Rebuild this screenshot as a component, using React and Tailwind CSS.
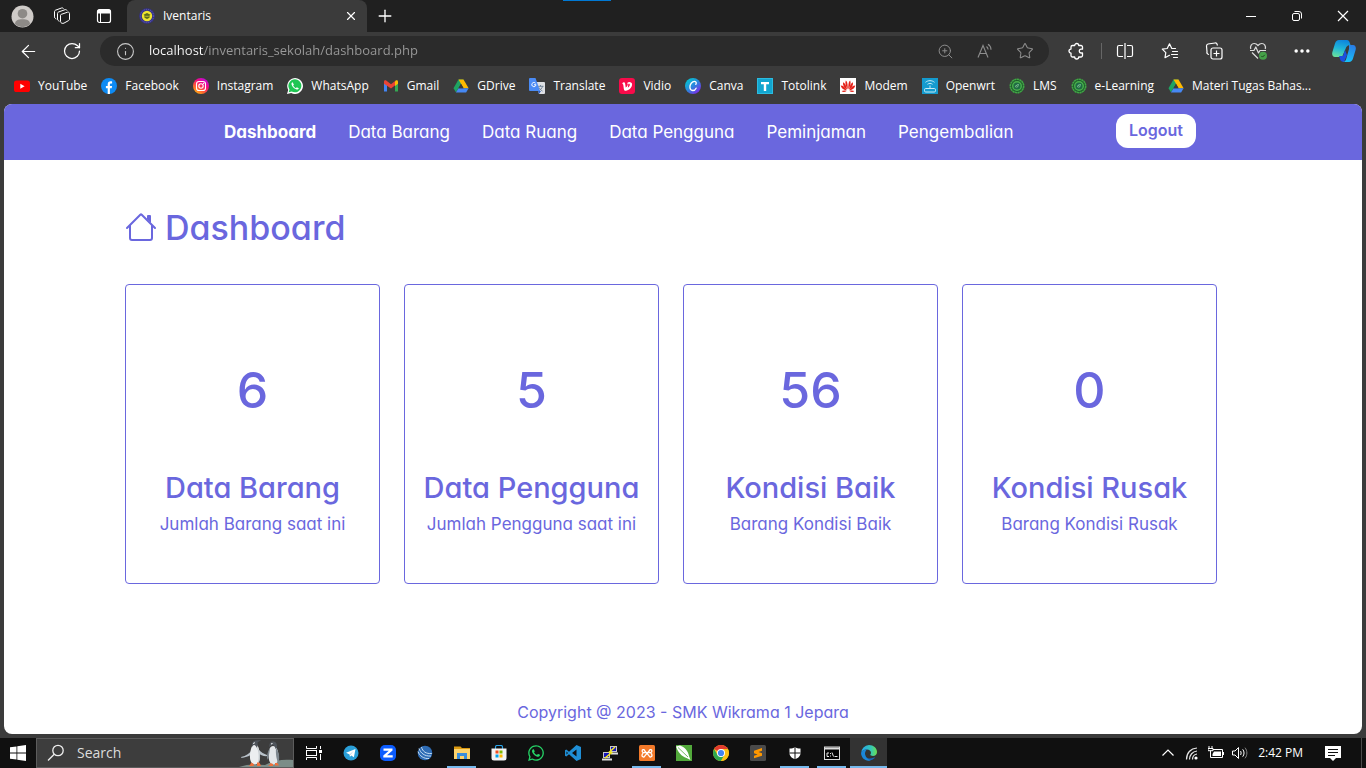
import React from "react";
import { ArrowLeft, RotateCw, Info, ZoomIn, Star, Ellipsis, X, Plus } from "lucide-react";
import { FaWhatsapp } from "react-icons/fa6";

function Svg({ size = 16, box = 16, className = "", children }) {
  return (
    <svg width={size} height={size} viewBox={`0 0 ${box} ${box}`} className={`shrink-0 ${className}`} fill="none" aria-hidden="true">
      {children}
    </svg>
  );
}

/* ---------- bookmark icons ---------- */
const YouTube = () => (
  <Svg>
    <rect x="0" y="2.5" width="16" height="11.5" rx="2.6" fill="#f00" />
    <path d="M6.3 5.8v4.9l4.3-2.45z" fill="#fff" />
  </Svg>
);
const Facebook = () => (
  <Svg>
    <circle cx="8" cy="8" r="8" fill="#0d8bf5" />
    <path d="M6.7 15.9V10.3H4.9V8h1.8V6.6c0-2.2 1.1-3.3 3-3.3.6 0 1.1.1 1.4.2v2h-1c-.9 0-1.2.4-1.2 1.2V8h2.2l-.4 2.3H8.9v5.6a8 8 0 0 1-2.2 0z" fill="#fff" />
  </Svg>
);
const Instagram = () => (
  <Svg>
    <defs>
      <linearGradient id="ig" x1="2" y1="16" x2="13" y2="0" gradientUnits="userSpaceOnUse">
        <stop stopColor="#ffc107" />
        <stop offset=".35" stopColor="#ff5a36" />
        <stop offset=".65" stopColor="#f5087e" />
        <stop offset="1" stopColor="#b40bf0" />
      </linearGradient>
    </defs>
    <circle cx="8" cy="8" r="8" fill="url(#ig)" />
    <rect x="3.5" y="3.5" width="9" height="9" rx="2.6" stroke="#fff" strokeWidth="1.1" />
    <circle cx="8" cy="8" r="2.2" stroke="#fff" strokeWidth="1.1" />
    <circle cx="10.6" cy="5.4" r=".6" fill="#fff" />
  </Svg>
);
const WhatsApp = () => (
  <Svg>
    <path d="M0 16l1.2-4.1A7.9 7.9 0 1 1 4.2 14.9z" fill="#fff" />
    <path d="M1.7 14.3l.8-2.8a6.5 6.5 0 1 1 2.2 2z" fill="#1fc653" />
    <path d="M5.600 4.200c-.8.3-1.300 1.100-1.100 2.100.5 2.500 2.700 4.700 5.200 5.200 1 .2 1.900-.4 2.100-1.300l-2-1-.9 1c-1.200-.5-2.200-1.400-2.800-2.600l.8-.9z" fill="#fff" />
  </Svg>
);
const Gmail = () => (
  <Svg>
    <path d="M1 13.500V4l3 2.300v7.200z" fill="#4285f4" />
    <path d="M15 13.500V4l-3 2.300v7.200z" fill="#34a853" />
    <path d="M1 5.800V3.800C1 2.400 2.500 2 3.500 2.700L8 6.200l4.500-3.500L12.500 7 8 10.500z" fill="#ea4335" />
    <path d="M15 5.800V3.800c0-1.400-1.500-1.800-2.500-1.100L12 3.200v4.700z" fill="#fbbc04" />
  </Svg>
);
const Drive = () => (
  <Svg>
    <path d="M5.500 1.500h5L6 9.300 2.900 14.300.5 10.200z" fill="#1ea362" />
    <path d="M5.500 1.500h5l5.100 8.700h-5z" fill="#ffba00" />
    <path d="M5.500 10.200h10.100l-2.500 4.300H2.900z" fill="#4688f4" />
    <path d="M8 5.800l2.500 4.400h-5z" fill="#3b3b3b" />
  </Svg>
);
const Translate = () => (
  <Svg>
    <path d="M6 4h9a1 1 0 0 1 1 1v10a1 1 0 0 1-1 1h-5z" fill="#dfe1e5" />
    <path d="M8.500 8.300h6M11.500 7v1.300M13.500 8.300c-.5 2-2 3.600-3.700 4.500M10 9.500c.7 1.500 2 2.800 3.500 3.600" stroke="#6b7f93" strokeWidth=".9" />
    <path d="M1 0h5.500L11 13H1a1 1 0 0 1-1-1V1a1 1 0 0 1 1-1z" fill="#4a8bf5" />
    <path d="M9 13h3l-2 3z" fill="#2a5bc0" />
    <path d="M6.500 5.200a2.100 2.100 0 1 0 .5 1.600H5" stroke="#fff" strokeWidth="1" />
  </Svg>
);
const Vidio = () => (
  <Svg>
    <rect width="16" height="16" rx="3" fill="#f80b4a" />
    <path d="M3.200 5.200c1.500-1.400 2.700-1 3 .8l.5 3.600c2-1.400 2.700-3 1.500-4.600 1.800-1.800 4.900-.9 4.900 1.400 0 3-3.400 6-6.200 6.300-1.400.1-1.900-.6-2.100-2l-.5-4z" fill="#fff" />
    <path d="M9.300 5.900c1-.5 1.800.3 1.500 1.300-.3 1-1.200 2-2 2.600z" fill="#f80b4a" />
  </Svg>
);
const Canva = () => (
  <Svg>
    <defs>
      <linearGradient id="cv" x1="2" y1="2" x2="13" y2="15" gradientUnits="userSpaceOnUse">
        <stop stopColor="#05c3d2" />
        <stop offset=".5" stopColor="#2b86dd" />
        <stop offset="1" stopColor="#7d2ae8" />
      </linearGradient>
    </defs>
    <circle cx="8" cy="8" r="8" fill="url(#cv)" />
    <path d="M10.800 6.400c.8-1.200.5-3-1.200-3-2.700 0-4.800 3-4.700 5.900.1 2 1.200 3.200 2.800 3.200 1.500 0 2.800-.9 3.400-2.300" stroke="#fff" strokeWidth="1.300" strokeLinecap="round" />
  </Svg>
);
const Totolink = () => (
  <Svg>
    <rect width="16" height="16" fill="#12a5cf" />
    <rect x=".5" y=".5" width="15" height="15" stroke="#2bbce0" />
    <path d="M4 4h8v2.200H9.200V13H6.800V6.200H4z" fill="#fff" />
  </Svg>
);
const Modem = () => (
  <Svg>
    <rect width="16" height="16" fill="#fff" />
    <g fill="#e5231b">
      <path d="M7.700 11.500C5.500 8 4.900 5 5.800 2.600c1.500.7 2 4 1.900 8.900z" />
      <path d="M8.300 11.500C10.500 8 11.100 5 10.200 2.600c-1.500.7-2 4-1.900 8.900z" />
      <path d="M7 11.800C4.200 10 2.600 7.200 3 4.300 5 5 6.600 8.200 7 11.800z" />
      <path d="M9 11.800c2.800-1.800 4.400-4.600 4-7.500-2 .7-3.600 3.900-4 7.500z" />
      <path d="M6.600 12.400C3.400 12 1.200 10.300.7 7.600c2.300 0 4.700 1.900 5.900 4.800zM9.400 12.400c3.200-.4 5.400-2.100 5.900-4.800-2.300 0-4.700 1.900-5.900 4.800z" />
      <path d="M6.500 12.900c-1.500 1.500-3.700 1.500-4.900.2 1.500-.7 3.300-.7 4.900-.2zM9.500 12.900c1.500 1.500 3.700 1.500 4.900.2-1.500-.7-3.300-.7-4.900-.2z" />
    </g>
  </Svg>
);
const Openwrt = () => (
  <Svg>
    <rect width="16" height="16" fill="#149bcf" />
    <path d="M3.500 4.300c2.500-2.200 6.500-2.200 9 0M5.500 6.300c1.400-1.200 3.600-1.200 5 0M8 7.500v3.500" stroke="#c5ebf7" strokeWidth="1" />
    <rect x="2.500" y="10.500" width="11" height="3.500" rx="1.200" stroke="#c5ebf7" />
  </Svg>
);
const Lms = () => (
  <Svg>
    <circle cx="8" cy="8" r="6.700" fill="#1d5a2c" stroke="#3fa544" strokeWidth="1.600" strokeDasharray="2.200 .4" />
    <circle cx="8" cy="8" r="4.300" fill="#1f6b43" stroke="#49b04b" strokeWidth="1.400" />
    <path d="M6 9.800c-.3-2.200 1.300-3.600 3.900-3.700.2 2.300-1.100 4-3.400 3.700z" fill="#6fb98a" />
    <path d="M6.200 10L9 7.200" stroke="#1b4a2f" strokeWidth=".7" />
  </Svg>
);

const bookmarks = [
  ["YouTube", YouTube], ["Facebook", Facebook], ["Instagram", Instagram], ["WhatsApp", WhatsApp],
  ["Gmail", Gmail], ["GDrive", Drive], ["Translate", Translate], ["Vidio", Vidio], ["Canva", Canva],
  ["Totolink", Totolink], ["Modem", Modem], ["Openwrt", Openwrt], ["LMS", Lms], ["e-Learning", Lms],
  ["Materi Tugas Bahas...", Drive],
];

/* ---------- browser chrome ---------- */
function IconButton({ label, className = "w-11", children }) {
  return (
    <button type="button" aria-label={label} className={`flex h-8 shrink-0 items-center justify-center ${className}`}>
      {children}
    </button>
  );
}

function TitleBar() {
  return (
    <div className="relative flex h-8 items-stretch bg-[#202020] text-white">
      <div className="absolute top-0 left-[563px] h-px w-12 bg-[#0078d4]" />
      <IconButton label="Profile">
        <Svg size={23} box={23}>
          <circle cx="11.500" cy="11.500" r="11" fill="#cfcbc8" />
          <circle cx="11.500" cy="8.700" r="4.800" fill="#8d8a87" />
          <path d="M4 19.300c0-4 3-5 7.500-5s7.500 1 7.500 5a11 11 0 0 1-15 0z" fill="#8d8a87" />
        </Svg>
      </IconButton>
      <IconButton label="Workspaces" className="w-9">
        <Svg size={18} box={18} className="stroke-white">
          <path d="M8.200 7.400l6.300-2.200c1-.3 2 .2 2 1.200v5.800c0 .7-.4 1.200-1 1.400l-4.500 2.500c-1.500.8-3.500 0-3.500-1.700V8.300c0-.4.3-.8.7-.9z" />
          <path d="M6.500 14.300l-.8-.4c-.8-.4-1.200-1-1.200-1.900V6.500c0-.7.4-1.300 1-1.500L12 2.700c.9-.3 1.700 0 2 .8" />
          <path d="M3.300 12l-.8-.4c-.7-.4-1-1-1-1.700V4.700c0-.7.4-1.300 1-1.500L8.500 1c.9-.3 1.700 0 2 .8" />
        </Svg>
      </IconButton>
      <IconButton label="Tab actions" className="w-[47px]">
        <Svg>
          <rect x="1.500" y="1.500" width="13" height="13" rx="2" stroke="#fff" strokeWidth="1.200" />
          <path d="M1.500 3a1.500 1.500 0 0 1 1.500-1.500h10A1.500 1.500 0 0 1 14.500 3v2.500h-13z" fill="#fff" />
          <path d="M4.500 5v9.500" stroke="#fff" />
        </Svg>
      </IconButton>
      <div className="flex w-60 items-center rounded-t-lg bg-[#3b3b3b] pr-2 pl-3">
        <Svg>
          <circle cx="8" cy="8" r="7.800" fill="#34318a" />
          <circle cx="8" cy="8" r="6.600" stroke="#7d78b8" strokeWidth=".7" strokeDasharray="1 1" />
          <circle cx="8" cy="8" r="5.200" fill="#efe52e" />
          <path d="M4.500 6.800L8 5l3.500 1.800-1 .7v2.300L8 11l-2.500-1.200V7.500z" fill="#5a6b1e" />
          <path d="M6.300 8.300h3.400" stroke="#efe52e" strokeWidth=".7" />
        </Svg>
        <span className="grow pl-2 text-xs">Iventaris</span>
        <button type="button" aria-label="Close tab" className="flex size-4 items-center justify-center">
          <X size={14} strokeWidth={2} />
        </button>
      </div>
      <IconButton label="New tab" className="w-9">
        <Plus size={20} strokeWidth={1.600} />
      </IconButton>
      <div className="grow" />
      <IconButton label="Minimize" className="w-[46px]">
        <Svg><path d="M3 8.500h10" stroke="#fff" /></Svg>
      </IconButton>
      <IconButton label="Restore" className="w-[46px]">
        <Svg className="stroke-white">
          <rect x="3.500" y="5.500" width="7" height="7" rx="1.500" />
          <path d="M5.500 3.500h4.500a2.500 2.500 0 0 1 2.500 2.500v4.500" />
        </Svg>
      </IconButton>
      <IconButton label="Close window" className="w-[46px]">
        <Svg><path d="M3 3l10 10M13 3L3 13" stroke="#fff" strokeWidth="1.200" /></Svg>
      </IconButton>
    </div>
  );
}

function AddressRow() {
  return (
    <div className="flex h-[38px] items-center pr-0.5 text-white">
      <IconButton label="Back" className="ml-1 w-12"><ArrowLeft size={21} strokeWidth={1.400} /></IconButton>
      <IconButton label="Refresh" className="mr-2 w-10"><RotateCw size={20} strokeWidth={1.500} /></IconButton>
      <div className="flex h-[30px] grow items-center rounded-full bg-[#2b2b2b] pr-1 text-[#8d8d8d]">
        <button type="button" aria-label="Site information" className="ml-4 text-[#c8c8c8]">
          <Info size={19} strokeWidth={1.400} />
        </button>
        <input
          type="text"
          aria-label="Address"
          defaultValue="localhost/inventaris_sekolah/dashboard.php"
          className="ml-3.5 min-w-0 grow bg-[linear-gradient(90deg,#fff_55px,#9a9a9a_55px)] bg-clip-text text-[13px] text-transparent outline-none"
        />
        <IconButton label="Zoom" className="w-10"><ZoomIn size={17} strokeWidth={1.400} /></IconButton>
        <IconButton label="Read aloud" className="w-10">
          <Svg>
            <path d="M1 14.500L6 2.500l5 12M2.800 10.500h6.400M9.500 3.500c1 .8 1.500 1.700 1.600 3M11 1.200c2 1.200 3 3 3 5.500" stroke="currentColor" strokeWidth="1.100" />
          </Svg>
        </IconButton>
        <IconButton label="Add to favorites" className="w-10"><Star size={18} strokeWidth={1.400} /></IconButton>
      </div>
      <IconButton label="Extensions" className="ml-0.5 w-[50px]">
        <Svg size={18} box={18}>
          <path d="M5.500 3.500h2.200a2 2 0 0 1 4 0H14a1.500 1.500 0 0 1 1.500 1.500v2.200h-1.300a1.900 1.900 0 0 0 0 3.800h1.300v2.500a1.500 1.500 0 0 1-1.500 1.500h-2.300a2 2 0 0 1-4 0H5.500A1.500 1.500 0 0 1 4 13.500v-2.400a2 2 0 0 1 0-4V5a1.500 1.500 0 0 1 1.500-1.500z" stroke="#fff" strokeWidth="1.300" strokeLinejoin="round" />
        </Svg>
      </IconButton>
      <span className="h-4 w-px bg-[#666]" />
      <IconButton label="Split screen" className="w-[46px]">
        <Svg size={18} box={18} className="stroke-white">
          <path d="M9 1v16M7 3.500H3A1.500 1.500 0 0 0 1.500 5v8A1.500 1.500 0 0 0 3 14.500h4M11 3.500h4A1.500 1.500 0 0 1 16.500 5v8a1.500 1.500 0 0 1-1.500 1.500h-4" strokeWidth="1.200" />
        </Svg>
      </IconButton>
      <IconButton label="Favorites">
        <Svg size={18} box={18} className="stroke-white">
          <path d="M14.500 6.500h-3.700L8.500 1.800 6.200 6.500 1.300 7.200l3.500 3.500-.8 5 4.500-2.400M11.500 9.500h5M10.500 12.500h6M12.500 15.500h4" strokeWidth="1.200" strokeLinejoin="round" strokeLinecap="round" />
        </Svg>
      </IconButton>
      <IconButton label="Collections">
        <Svg size={18} box={18} className="stroke-white">
          <rect x="6" y="6" width="11" height="11" rx="2" strokeWidth="1.200" />
          <path d="M11.500 8.500v6M8.500 11.500h6M4 12.500l-.7-.2a2 2 0 0 1-1.300-2.500L1.500 4a2 2 0 0 1 1.500-2L10 1a2 2 0 0 1 2.200 1.500l.3 1" strokeWidth="1.200" />
        </Svg>
      </IconButton>
      <IconButton label="Browser essentials">
        <Svg size={18} box={18}>
          <path d="M1.800 7C.8 4 2.700 1.500 5.200 1.500c1.700 0 2.800.8 3.800 2 1-1.200 2.100-2 3.800-2 2.500 0 4.400 2.500 3.400 5.500M3 10.500l6 6M1 8.500h4l1.800-3.500 2.700 6 1.500-2.500h6" stroke="#ddd" strokeWidth="1.200" strokeLinejoin="round" />
          <circle cx="14" cy="13.800" r="4" fill="#46a049" />
          <path d="M12.300 13.900l1.200 1.200 2.300-2.300" stroke="#173d1a" strokeWidth=".9" />
        </Svg>
      </IconButton>
      <IconButton label="Settings and more"><Ellipsis size={20} strokeWidth={2.200} /></IconButton>
      <IconButton label="Copilot" className="w-10">
        <Svg size={24} box={24}>
          <defs>
            <linearGradient id="cpa" x1="8" y1="0" x2="4" y2="18" gradientUnits="userSpaceOnUse">
              <stop stopColor="#0d83dd" /><stop offset=".5" stopColor="#1fb5d9" /><stop offset="1" stopColor="#6be29a" />
            </linearGradient>
            <linearGradient id="cpb" x1="20" y1="5" x2="14" y2="23" gradientUnits="userSpaceOnUse">
              <stop stopColor="#2a78e4" /><stop offset="1" stopColor="#17c5fa" />
            </linearGradient>
          </defs>
          <path d="M7 1h8c1.500 0 2.200 1 2.700 2.500L18.500 6c-3 0-4 1.200-4.800 3.500L10 18H3C.5 18-.3 15.500.4 13L3 4.500C3.700 2.200 5 1 7 1z" fill="url(#cpa)" />
          <path d="M7 17h4l2-6 2 5-3 7c-2 0-3.300-.8-4-3z" fill="#1b4fe0" />
          <path d="M17 6h4c2.500 0 3.300 2.500 2.600 5L21 19.500c-.7 2.200-2 3.500-4 3.500h-6c2 0 2.700-1.500 3.200-3L17 10z" fill="url(#cpb)" />
        </Svg>
      </IconButton>
    </div>
  );
}

function Bookmarks() {
  return (
    <nav aria-label="Bookmarks" className="flex h-[34px] items-center gap-3.5 overflow-hidden pb-0.5 pl-3.5 text-xs text-white">
      {bookmarks.map(([name, Icon]) => (
        <a key={name} href="#" className="flex shrink-0 items-center gap-2 whitespace-nowrap">
          <Icon />
          {name}
        </a>
      ))}
    </nav>
  );
}

/* ---------- web page ---------- */
const links = ["Dashboard", "Data Barang", "Data Ruang", "Data Pengguna", "Peminjaman", "Pengembalian"];
const cards = [
  ["6", "Data Barang", "Jumlah Barang saat ini"],
  ["5", "Data Pengguna", "Jumlah Pengguna saat ini"],
  ["56", "Kondisi Baik", "Barang Kondisi Baik"],
  ["0", "Kondisi Rusak", "Barang Kondisi Rusak"],
];

function Page() {
  return (
    <div className="mx-1 mb-1 flex grow flex-col overflow-hidden rounded-lg bg-white font-[Inter,sans-serif] text-[17px] text-[#6a67de] [font-feature-settings:'cv11']">
      <header className="flex h-14 items-center justify-between bg-[#6a67de] pr-[166px] pb-0.5 pl-[220px]">
        <nav aria-label="Main" className="flex gap-8 pt-1 text-white">
          {links.map((name, i) => (
            <a key={name} href="#" className={i === 0 ? "font-bold" : ""}>{name}</a>
          ))}
        </nav>
        <button type="button" className="h-[34px] w-20 rounded-xl bg-white pb-0.5 text-base font-semibold">Logout</button>
      </header>
      <main className="mx-auto w-full max-w-[1140px] grow px-3">
        <h1 className="mt-12 flex items-center gap-2 text-[34px] leading-9 font-medium">
          <svg width="32" height="32" viewBox="0 0 16 16" fill="currentColor" aria-hidden="true">
            <path fillRule="evenodd" d="M2 13.500V7h1v6.500a.5.5 0 0 0 .5.5h9a.5.5 0 0 0 .5-.5V7h1v6.500a1.500 1.500 0 0 1-1.500 1.500h-9A1.500 1.500 0 0 1 2 13.500zm11-11V6l-2-2V2.500a.5.5 0 0 1 .5-.5h1a.5.5 0 0 1 .5.5z" />
            <path fillRule="evenodd" d="M7.293 1.500a1 1 0 0 1 1.414 0l6.647 6.646a.5.5 0 0 1-.708.708L8 2.207 1.354 8.854a.5.5 0 1 1-.708-.708L7.293 1.500z" />
          </svg>
          <span className="pt-0.5">Dashboard</span>
        </h1>
        <div className="mt-[38px] grid grid-cols-4 gap-6 pr-6">
          {cards.map(([count, title, text]) => (
            <section key={title} className="flex h-[300px] flex-col items-center rounded border border-[#6a67de] text-center whitespace-nowrap">
              <p className="mt-[75px] text-[50px] leading-[60px] font-medium">{count}</p>
              <h2 className="mt-[50px] text-[29px] leading-9 font-medium">{title}</h2>
              <p className="mt-1.5 leading-6">{text}</p>
            </section>
          ))}
        </div>
      </main>
      <footer className="pb-2.5 text-center text-base leading-6">Copyright @ 2023 - SMK Wikrama 1 Jepara</footer>
    </div>
  );
}

/* ---------- taskbar ---------- */
const TaskView = () => (
  <Svg className="stroke-white">
    <path d="M.5 1v2.500h10V1M.5 15v-2.500h10V15" />
    <rect x=".5" y="5.500" width="10" height="5" />
    <path d="M14.500 1v3M14.500 9v6" />
    <path d="M13 6.500h3" strokeWidth="3" />
  </Svg>
);
const Telegram = () => (
  <Svg>
    <circle cx="8" cy="8" r="7.500" fill="#2a9fd8" />
    <path d="M3 7.800L12.500 4l-1.600 8.300-2.600-1.900-1.400 1.300-.3-2.300z" fill="#fff" />
    <path d="M6.600 9.400L11 5.600 7.300 10z" fill="#a9cfe3" />
  </Svg>
);
const Zalo = () => (
  <Svg>
    <rect width="16" height="16" rx="5" fill="#0b5cff" />
    <path d="M3.500 3.500h9v2L7 10.300h5.700v2.200H3.300v-2L8.800 5.700H3.500z" fill="#fff" />
  </Svg>
);
const Swirl = () => (
  <Svg>
    <circle cx="8" cy="8" r="7.300" fill="#2e6cb5" />
    <path d="M2 3.500C3.500 8 7.500 11.500 14 11M4.500 2C5.500 6.500 9 9 14.800 8.500M1 6.500c1.500 4.500 6 7.500 11 7" stroke="#c5ddf3" strokeWidth="1" />
  </Svg>
);
const Explorer = () => (
  <Svg>
    <path d="M0 1.500h6.500L8 3h8v5H0z" fill="#dc9a10" />
    <path d="M0 4h16v10H0z" fill="#fdd36c" />
    <path d="M3 14V8h10v6h-3v-3H6v3z" fill="#3a8ddb" />
  </Svg>
);
const Store = () => (
  <Svg>
    <path d="M4.500 4V2A1.500 1.500 0 0 1 6 .5h4A1.500 1.500 0 0 1 11.500 2v2" stroke="#2aa4e8" strokeWidth="1.200" />
    <path d="M.5 3.500h15V13a2.500 2.500 0 0 1-2.500 2.500H3A2.500 2.500 0 0 1 .5 13z" fill="#f4f4f4" />
    <path d="M4.500 5.500h3v3h-3z" fill="#f25022" /><path d="M8.500 5.500h3v3h-3z" fill="#7fba00" />
    <path d="M4.500 9.500h3v3h-3z" fill="#00a4ef" /><path d="M8.500 9.500h3v3h-3z" fill="#ffb900" />
  </Svg>
);
const WhatsAppLine = () => <FaWhatsapp size={18} className="text-[#25d366]" />;
const Code = () => (
  <Svg>
    <path d="M11.500 0L16 2v12l-4.500 2L4 9.300 1.300 11.500 0 10.800V5.200l1.300-.7L4 6.700z" fill="#1f8fd6" />
    <path d="M11.500 4.500v7L7 8zM1.500 6.500v3L3 8z" fill="#101010" />
  </Svg>
);
const Putty = () => (
  <Svg>
    <path d="M8 1h7v6H8z" fill="#c9c9c9" /><path d="M9 2h5v4H9z" fill="#1616b8" />
    <path d="M1 7h7v6H1z" fill="#c9c9c9" /><path d="M2 8h5v4H2z" fill="#1616b8" />
    <path d="M0 14.500h10M9 8.500h7" stroke="#ddd" strokeWidth="2" />
    <path d="M13 2L7.500 7l2 .8L3 13" stroke="#f5e81c" strokeWidth="1.500" />
  </Svg>
);
const Xampp = () => (
  <Svg>
    <rect width="16" height="16" rx="1.500" fill="#f37a2a" />
    <path d="M6 6.300C5.600 4.900 4.900 4.400 4 4.700c-1.300.5-1 2.600.3 2.900h7.400c1.300-.3 1.600-2.400.3-2.900-.9-.3-1.600.2-2 1.600L6 10.600c-.4 1.300-1.300 1.700-2.200 1.200-1.300-.7-.9-3 .5-3.400M10 10.600c.4 1.300 1.300 1.700 2.200 1.200 1.300-.7.9-3-.5-3.400M6 6.300l4 4.300" stroke="#fff" strokeWidth="1.300" strokeLinejoin="round" />
  </Svg>
);
const Corel = () => (
  <Svg>
    <rect width="16" height="16" fill="#52a93b" />
    <path d="M0 1.500L4 .5c4.500 1.500 8 5 9 10.500l1.500 4-4-2C5.500 11.500 2 7 0 1.500z" fill="#fff" />
    <path d="M2 2.500l10 9.500" stroke="#52a93b" strokeWidth=".8" />
  </Svg>
);
const Chrome = () => (
  <Svg>
    <circle cx="8" cy="8" r="8" fill="#fbc116" />
    <path d="M8 8L1.100 4A8 8 0 0 1 14.900 4z" fill="#e33b2e" />
    <path d="M1.100 4A8 8 0 0 0 8 16l3.500-6L8 8 4.500 10z" fill="#2da94f" />
    <path d="M8 4h6.900A8 8 0 0 1 8 16l3.500-6z" fill="#fbc116" />
    <circle cx="8" cy="8" r="4" fill="#fff" /><circle cx="8" cy="8" r="3.100" fill="#4285f4" />
  </Svg>
);
const Sublime = () => (
  <Svg>
    <rect width="16" height="16" rx="1.500" fill="#4a4a4a" />
    <path d="M4 5.700L12 3v2.700L8.500 7 12 8.200v2.500L4 13.300v-2.600L7.600 9.500 4 8.300z" fill="#ff9800" />
  </Svg>
);
const Shield = () => (
  <Svg>
    <path d="M8 2c1.500 1.200 3 1.500 5.500 1.500V8c0 3.200-2.500 5.200-5.500 6.300C5 13.200 2.500 11.200 2.500 8V3.500C5 3.500 6.500 3.200 8 2z" fill="#fff" />
    <path d="M8 2v13M2.500 8h11" stroke="#101010" />
  </Svg>
);
const Terminal = () => (
  <Svg>
    <rect x=".5" y="2" width="15" height="12.500" fill="#050505" stroke="#ddd" />
    <path d="M.5 3.500h15" stroke="#ddd" strokeWidth="2" />
    <path d="M5 8H3v3.500h2M6.500 8v1M6.500 10.500v1M8 7.500l1.500 4M10.500 11.500h3" stroke="#fff" strokeWidth=".9" />
  </Svg>
);
const Edge = () => (
  <Svg>
    <defs>
      <linearGradient id="eg" x1="1" y1="4" x2="16" y2="5" gradientUnits="userSpaceOnUse">
        <stop stopColor="#28a9e8" /><stop offset=".6" stopColor="#35c7b5" /><stop offset="1" stopColor="#6bdf52" />
      </linearGradient>
    </defs>
    <path d="M.2 8A8 8 0 0 1 8 0c4.500 0 8 3.200 8 7 0 2.500-1.800 4-4 4-1.500 0-2.700-.5-2.700-1.200 0-.5.7-.8.700-2C10 6 8.300 4.500 6 4.500 3 4.500.7 6 .2 8z" fill="url(#eg)" />
    <path d="M.2 8C.7 6 3 4.500 6 4.500 4.500 5.500 4 7 4 8.500c0 4 3.500 6.500 8.500 4.300.8-.3 1.600-.4 1.300.2A8 8 0 0 1 .2 8z" fill="#1668c0" />
    <path d="M6 4.500c-1.500 1-2 2.500-2 4 0 3.500 2.500 6.200 6 6.800C4.500 17 .2 13 .2 8 .7 6 3 4.500 6 4.500z" fill="#1b86d8" />
  </Svg>
);

const apps = [
  ["Task view", TaskView], ["Telegram", Telegram], ["Meetings", Zalo], ["Swirl", Swirl],
  ["File Explorer", Explorer, "on"], ["Store", Store], ["WhatsApp", WhatsAppLine], ["Code", Code],
  ["Remote session", Putty], ["XAMPP", Xampp, "on"], ["Graphics", Corel], ["Chrome", Chrome],
  ["Sublime", Sublime], ["Security", Shield, "on"], ["Terminal", Terminal, "on"], ["Edge", Edge, "active"],
];

function Penguins() {
  return (
    <svg width="56" height="28" viewBox="0 0 56 28" className="shrink-0" fill="none" aria-hidden="true">
      <path d="M2 28c8-3 16-3 26-2 10-5 18-6 28-5v7z" fill="#7c8d88" />
      <path d="M15 11c-2 3-6 6-11 7 0 1 1 1 2 .700 4-.7 7-1.700 9-3.700zM22 11c2 2 5 4 8 5 .5.700 0 1.500-1 1.300-3-.300-6-1.300-8-3.300z" fill="#b9c2ca" />
      <path d="M18 5c3 0 4.500 5 5 11 .2 5-1.500 9.500-5 9.500s-5.500-4-5-9.500c.500-6 2-11 5-11z" fill="#eceef0" />
      <path d="M19.500 8c2.500 4 3 11 1 17 2-1 2.800-5 2.500-9-.4-4-1.500-7-3.500-8z" fill="#c4cace" />
      <path d="M15 8c-.5-4 1-6 3.500-6.500L24 1l-3.500 2.500C21 5 20.500 7 20 9c-1-2-2-3-3-3-.7 0-1.500 1-2 2z" fill="#4f545b" />
      <path d="M16 4.500l2-.800" stroke="#e6e8ea" />
      <path d="M36 7c3.500 0 5 4 5.500 9 .2 5-1.500 9.500-5 9.500s-5-4-5-9.500c0-5 1.500-9 4.500-9z" fill="#e3e6e9" />
      <path d="M39 9c3 4 4 9 2.500 15-2-3-3-9-2.500-15zM33 9c-2 3-3.500 7-3 12 1.500-2 2.500-7 3-12z" fill="#7d868e" />
      <path d="M32.500 8C32 4.500 33.500 2.500 36 2.500s4.500 2 4 6l-1.500 1.500C38 7.500 37 6 35.500 6s-2 1-3 2z" fill="#4f545b" />
      <path d="M34 5l1.500-.5" stroke="#fff" />
      <path d="M14 23.500l3 1.500-.5 2h-5c1-.5 2-1 2.500-3.500zM20 23.500l2.500 0 1.500 3.500h-4zM33.500 24l2.500 1v2h-5c1-.5 2-1 2.500-3zM38 24h2.500l1.500 2.500h-4z" fill="#f0703c" />
    </svg>
  );
}

function Taskbar() {
  return (
    <footer className="flex h-[30px] items-stretch bg-[#101010] text-white">
      <button type="button" aria-label="Start" className="flex w-9 items-center justify-center">
        <Svg><path d="M0 2.300L6.500 1.400v6.200H0zM7.300 1.300L16 0v7.600H7.300zM0 8.400h6.500v6.200L0 13.700zM7.300 8.400H16V16l-8.700-1.300z" fill="#fff" /></Svg>
      </button>
      <label className="mr-px flex w-[258px] items-center border border-[#5c5c5c] bg-[#3d3d3d] pl-2.5">
        <Svg size={18} box={18}>
          <circle cx="11" cy="6.500" r="5.200" stroke="#eee" strokeWidth="1.300" />
          <path d="M7.200 10.300L1 16.500" stroke="#eee" strokeWidth="1.300" />
        </Svg>
        <input type="text" aria-label="Search" placeholder="Search" className="ml-3 w-0 min-w-0 grow bg-transparent text-sm outline-none placeholder:text-[#dcdcdc]" />
        <Penguins />
      </label>
      {apps.map(([name, Icon, state]) => (
        <button key={name} type="button" aria-label={name} className={`flex w-[37px] items-center justify-center ${state === "active" ? "bg-[#333]" : "px-1"}`}>
          <span className={`flex h-full grow items-center justify-center border-y-2 border-t-transparent ${state ? "border-b-[#76b9ed]" : "border-b-transparent"}`}>
            <Icon />
          </span>
        </button>
      ))}
      <div className="grow" />
      <div className="flex items-center">
        <button type="button" aria-label="Hidden icons" className="mr-2">
          <Svg><path d="M2.500 10.500L8 5l5.500 5.500" stroke="#fff" strokeWidth="1.200" /></Svg>
        </button>
        <Svg className="mr-2">
          <path d="M2.500 14.500C2.500 8 6.500 3.500 13 3M5.500 14.500c0-4.500 3-8 7.500-8.500M8.500 14.500c0-3 1.700-5 4.500-5.500" stroke="#e6e6e6" strokeWidth="1.200" />
          <circle cx="12" cy="13" r="1.600" fill="#fff" />
        </Svg>
        <Svg className="mr-2">
          <path d="M1 1v3M4 1v3M0 3.500h5v2.200H0zM2.500 5.500V9" stroke="#fff" />
          <path d="M5 4.500h9.500v8H2.500V9" stroke="#fff" /><path d="M14.500 7H16v3h-1.500zM6 6.500h7v4.500H4.500V9z" fill="#fff" />
        </Svg>
        <Svg className="mr-2.5">
          <path d="M.5 6v4H3l3.500 3.500v-11L3 6zM8.500 6c.8 1 .8 3 0 4M10.700 4.300c1.800 2 1.800 5.400 0 7.400" stroke="#fff" />
          <path d="M13 2.700c2.500 3 2.500 7.600 0 10.600" stroke="#888" />
        </Svg>
        <time className="text-xs">2:42 PM</time>
        <button type="button" aria-label="Notifications" className="ml-[22px] mr-5">
          <Svg><path d="M0 1h16v12h-5l-3 3-3-3H0z" fill="#fff" /><path d="M3 4.500h10M3 7.500h10M3 10.500h7" stroke="#101010" /></Svg>
        </button>
        <span className="mr-1 h-full w-px self-stretch bg-[#4a4a4a]" />
      </div>
    </footer>
  );
}

export default function App() {
  return (
    <div className="flex min-h-screen flex-col bg-[#3b3b3b] font-['Open_Sans',sans-serif]">
      <TitleBar />
      <AddressRow />
      <Bookmarks />
      <Page />
      <Taskbar />
    </div>
  );
}
